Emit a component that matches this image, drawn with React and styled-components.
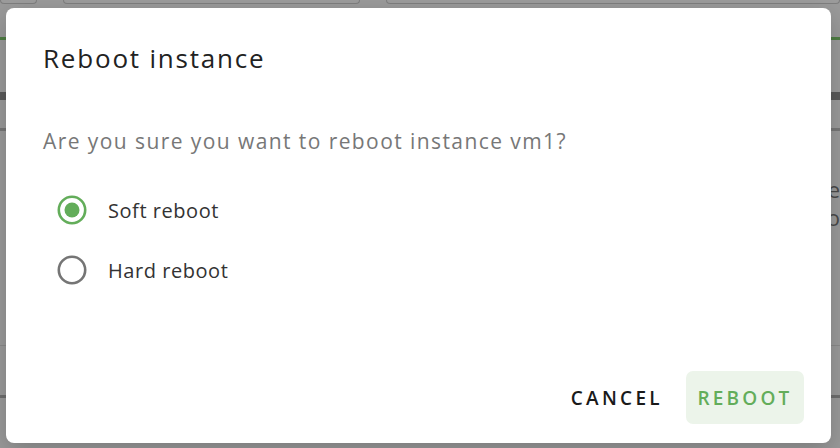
import React, { useState } from "react";
import styled, { createGlobalStyle } from "styled-components";

const Global = createGlobalStyle`
  html, body { margin: 0; padding: 0; }
  body { width: 840px; height: 448px; overflow: hidden; font-family: "Open Sans", "Lato", sans-serif; }
`;

const Page = styled.div`
  position: relative;
  width: 840px;
  height: 448px;
  overflow: hidden;
  background: #9a9a9a;
`;

const Backdrop = styled.div`
  display: flex;
  flex-direction: column;
  height: 100%;
`;

const TopCards = styled.div`
  display: flex;
  gap: 26px;
  height: 4px;
`;

const TopCard = styled.div`
  width: ${(p) => p.$w}px;
  flex: ${(p) => (p.$grow ? 1 : "none")};
  border: 1px solid #7e7e7e;
  border-top: none;
  border-radius: 0 0 4px 4px;
  background: #9c9c9c;
`;

const Rule = styled.div`
  margin-top: ${(p) => p.$top}px;
  height: ${(p) => p.$h}px;
  background: ${(p) => p.$c};
`;

const SideText = styled.div`
  display: flex;
  justify-content: flex-end;
  margin-top: ${(p) => p.$top}px;
  font-size: 22px;
  line-height: 28px;
  color: #4a4a4a;
  height: 28px;
`;

const Dialog = styled.div`
  position: absolute;
  left: 6px;
  top: 8px;
  width: 825px;
  height: 435px;
  box-sizing: border-box;
  background: #fff;
  border-radius: 8px;
  box-shadow: 0 8px 24px rgba(0, 0, 0, 0.2);
  display: flex;
  flex-direction: column;
  padding: 32px 27px 19px 37px;
`;

const Title = styled.h2`
  margin: 0;
  font-size: 26px;
  line-height: 36px;
  font-weight: 500;
  color: #222;
  letter-spacing: 1.8px;
`;

const Question = styled.p`
  margin: 51px 0 0;
  font-size: 21px;
  line-height: 28px;
  color: #777;
  letter-spacing: 1.42px;
`;

const Options = styled.div`
  display: flex;
  flex-direction: column;
  gap: 30px;
  margin-top: 40px;
  padding-left: 14px;
`;

const Option = styled.label`
  display: flex;
  align-items: center;
  gap: 21px;
  font-size: 20px;
  letter-spacing: 0.55px;
  color: #333;
  cursor: pointer;
  height: 30px;
`;

const Actions = styled.div`
  margin-top: auto;
  display: flex;
  justify-content: flex-end;
  align-items: center;
  gap: 23px;
`;

const Button = styled.button`
  border: none;
  border-radius: 7px;
  height: 53px;
  padding: 0;
  width: ${(p) => (p.$primary ? "118px" : "auto")};
  background: ${(p) => (p.$primary ? "#ecf4ea" : "transparent")};
  color: ${(p) => (p.$primary ? "#63ad5a" : "#1a1a1a")};
  font-family: "Open Sans", sans-serif;
  font-size: 19px;
  font-weight: 600;
  letter-spacing: ${(p) => (p.$primary ? 3.2 : 3.3)}px;
  cursor: pointer;
`;

function RadioIcon({ checked }) {
  return (
    <svg width="30" height="30" viewBox="0 0 30 30">
      <circle
        cx="15"
        cy="15"
        r="13.2"
        fill="none"
        stroke={checked ? "#63ad5a" : "#757575"}
        strokeWidth="2.6"
      />
      {checked && <circle cx="15" cy="15" r="7.5" fill="#63ad5a" />}
    </svg>
  );
}

export default function App() {
  const [mode, setMode] = useState("soft");
  return (
    <>
      <Global />
      <Page>
        <Backdrop>
          <TopCards>
            <TopCard $w={35} />
            <TopCard $w={295} />
            <TopCard $grow />
          </TopCards>
          <Rule $top={33} $h={3} $c="#4e7d43" />
          <Rule $top={52} $h={8} $c="#5a5a5a" />
          <Rule $top={28} $h={3} $c="#777" />
          <SideText $top={44}>e</SideText>
          <SideText $top={0}>o</SideText>
          <Rule $top={114} $h={1} $c="#8a8a8a" />
          <Rule $top={49} $h={3} $c="#6e6e6e" />
        </Backdrop>
        <Dialog role="dialog">
          <Title>Reboot instance</Title>
          <Question>Are you sure you want to reboot instance vm1?</Question>
          <Options>
            <Option onClick={() => setMode("soft")}>
              <RadioIcon checked={mode === "soft"} />
              Soft reboot
            </Option>
            <Option onClick={() => setMode("hard")}>
              <RadioIcon checked={mode === "hard"} />
              Hard reboot
            </Option>
          </Options>
          <Actions>
            <Button>CANCEL</Button>
            <Button $primary>REBOOT</Button>
          </Actions>
        </Dialog>
      </Page>
    </>
  );
}
